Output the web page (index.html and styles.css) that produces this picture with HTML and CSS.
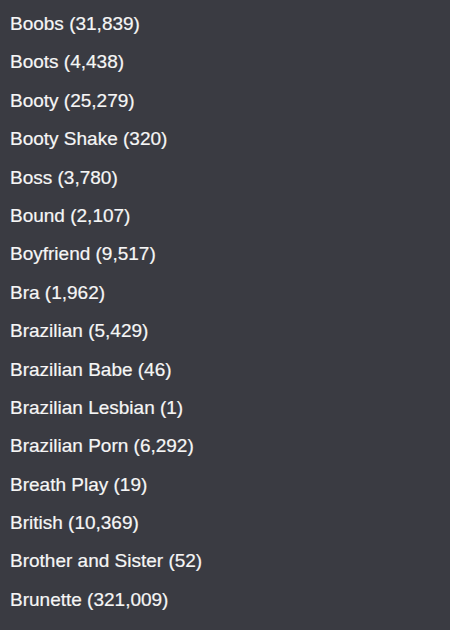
FILE: index.html
```html
<!DOCTYPE html>
<html>
<head>
<meta charset="utf-8">
<link rel="stylesheet" href="styles.css">
</head>
<body>
<ul class="tags">
<li>Boobs (31,839)</li>
<li>Boots (4,438)</li>
<li>Booty (25,279)</li>
<li>Booty Shake (320)</li>
<li>Boss (3,780)</li>
<li>Bound (2,107)</li>
<li>Boyfriend (9,517)</li>
<li>Bra (1,962)</li>
<li>Brazilian (5,429)</li>
<li>Brazilian Babe (46)</li>
<li>Brazilian Lesbian (1)</li>
<li>Brazilian Porn (6,292)</li>
<li>Breath Play (19)</li>
<li>British (10,369)</li>
<li>Brother and Sister (52)</li>
<li>Brunette (321,009)</li>
</ul>
</body>
</html>
```
FILE: styles.css
```css
html, body {
  margin: 0;
  padding: 0;
  background: #3a3b42;
  height: 100%;
}
.tags {
  list-style: none;
  margin: 0;
  padding: 5px 0 0 10px;
  font-family: "Liberation Sans", Arial, sans-serif;
  font-size: 19px;
  color: #f6f6f6;
  -webkit-text-stroke: 0.2px #f6f6f6;
}
.tags li {
  line-height: 38.4px;
  height: 38.4px;
}
```
